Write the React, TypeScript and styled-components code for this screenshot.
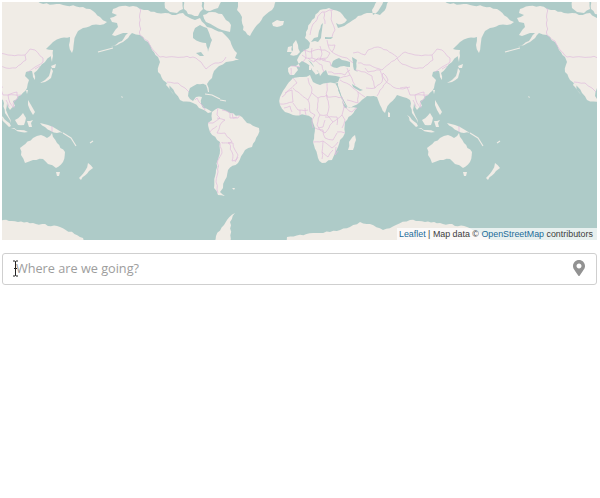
import React from 'react';
import styled, { createGlobalStyle } from 'styled-components';
import { FaMapMarkerAlt } from 'react-icons/fa';

const SEA = '#aecbc8';
const LAND = '#f0ece6';
const BORDER = '#dfbcdc';

const Global = createGlobalStyle`
  html, body { margin: 0; padding: 0; background: #fff; }
  input::placeholder { color: #9d9d9d; opacity: 1; }
`;

const Page = styled.div`
  display: flex;
  flex-direction: column;
  gap: 13px;
  width: 595px;
  padding: 2px 3px 0 2px;
  font-family: "Open Sans", sans-serif;
`;

const MapBox = styled.div`
  position: relative;
  height: 238px;
  overflow: hidden;
  background: ${SEA};
`;

const MapArt = styled.svg`
  display: block;
  width: 595px;
  height: 238px;
`;

const Attribution = styled.div`
  position: absolute;
  right: 0;
  bottom: 0;
  width: 194px;
  height: 12px;
  padding-left: 2px;
  padding-right: 4px;
  background: rgba(255, 255, 255, 0.7);
  font: 8.9px/12px "Liberation Sans", Arial, sans-serif;
  color: #3c3c3c;
  white-space: nowrap;
`;

const AttrLink = styled.a`
  color: #1d6c98;
  text-decoration: none;
`;

const Search = styled.label`
  position: relative;
  display: flex;
  align-items: center;
  height: 30px;
  padding: 0 11px 2px 13px;
  box-sizing: border-box;
  height: 32px;
  border: 1px solid #cfcfcf;
  border-radius: 3px;
  background: #fff;
`;

const SearchInput = styled.input`
  flex: 1;
  min-width: 0;
  border: 0;
  outline: 0;
  padding: 0;
  background: transparent;
  font: 12.7px "Open Sans", sans-serif;
  color: #555;
`;

const PinIcon = styled(FaMapMarkerAlt)`
  flex: none;
  width: 12px;
  height: 16px;
  color: #929292;
`;

const TextCursor = styled.svg`
  position: absolute;
  left: 9px;
  top: 6px;
  width: 7px;
  height: 17px;
`;

const lands = [
  // North America
  'M140,9 133,6 122,6 113,9 112,13 117,15 110,18 112,22 117,23 118,27 112,35 115,36 123,33 128,33 122,41 110,47 123,42 132,33 140,35 148,42 152,50 158,57 160,62 158,72 163,80 168,84 175,93 180,100 193,103 199,108 208,113 212,112 209,110 203,108 201,104 202,97 196,97 193,101 190,99 188,96 190,88 197,84 206,85 208,92 209,92 207,84 212,78 214,71 219,66 226,62 233,61 239,60 235,58 237,53 233,48 228,38 222,32 215,30 207,27 200,18 195,20 188,17 183,13 172,15 165,13 157,13 148,10Z',
  'M167,83 172,92 174,95 170,90 166,85Z',
  // Arctic islands
  'M165,0 182,0 183,9 177,13 170,12 165,8Z',
  'M184,0 201,0 203,9 198,16 188,14 184,9Z',
  'M203,0 222,0 218,8 210,11 204,9Z',
  'M203,15 212,12 222,14 231,25 230,32 222,30 214,26 206,22Z',
  // Greenland
  'M238,0 276,0 272,10 263,17 257,25 250,36 243,30 242,17 237,10Z',
  // Iceland
  'M272,23 277,20 284,21 283,25 277,27 273,26Z',
  // South America
  'M212,112 218,108 230,113 242,117 247,123 259,128 258,135 252,147 245,150 238,163 228,170 225,180 223,188 220,192 225,196 218,195 214,188 216,170 220,150 220,142 210,132 208,123 212,120Z',
  // Africa
  'M293,78 287,85 280,97 280,105 285,112 293,115 305,115 312,118 315,128 313,142 318,158 322,163 332,160 338,147 340,140 345,133 345,122 357,108 347,108 342,100 338,87 338,83 327,83 320,85 313,82 310,75 303,77Z',
  // Eurasia
  'M290,75 288,68 291,66 300,67 297,60 299,56 305,50 309,48 310,43 305,38 306,32 312,20 320,10 329,8 340,12 347,20 342,24 336,23 338,28 347,24 358,16 370,13 380,15 386,8 389,0 440,0 447,3 470,5 490,7 500,11 507,17 514,22 507,25 499,25 490,28 485,31 481,42 479,53 476,45 477,37 468,38 460,42 455,47 453,49 459,50 458,56 452,62 446,68 441,73 442,80 440,77 439,71 433,72 432,76 436,80 434,88 428,95 420,101 422,106 417,110 414,103 413,110 418,123 412,113 410,100 403,97 397,95 390,103 385,113 380,105 377,97 367,96 360,102 350,108 345,108 342,98 338,88 335,83 338,82 340,77 336,76 328,75 326,70 323,72 320,76 317,70 313,65 308,60 313,66 318,72 316,75 312,70 306,63 302,61 296,66 298,70 294,75Z',
  'M296,40 298,45 300,52 297,55 290,55 293,50 293,44Z',
  'M288,47 292,46 292,52 287,52Z',
  'M309,66 311,66 311,70 309,70Z',
  'M316,72 319,72 318,74Z',
  'M373,15 380,8 384,0 378,0 372,10Z',
  'M447,83 452,80 456,76 458,68 460,71 458,78 452,82Z',
  'M458,66 463,64 462,68 459,68Z',
  'M458,50 460,50 460,56 459,62 458,58Z',
  'M433,90 435,90 434,94Z',
  'M388,112 390,113 390,117 388,117Z',
  'M422,120 430,113 433,118 431,125 425,125Z',
  'M407,115 410,117 418,126 416,127 412,123Z',
  'M418,128 427,130 435,132 428,132Z',
  'M434,121 440,120 438,123 439,127 436,127 435,124Z',
  'M447,123 455,125 460,127 470,133 464,133 458,131 452,127Z',
  'M435,100 438,105 442,112 440,115 437,110 435,105Z',
  // Australia
  'M427,148 440,138 448,135 454,138 459,133 464,143 472,152 470,162 463,168 455,164 450,159 440,160 432,163 428,155Z',
  'M463,172 467,172 466,176 464,176Z',
  'M495,163 500,168 496,171 488,180 486,178 492,171Z',
  'M348,150 349,142 355,135 356,140 353,150Z',
  // Antarctica
  'M285,245 287,237 313,233 330,232 350,227 360,222 370,224 383,230 396,225 410,220 440,223 467,227 490,238 492,245Z',
  'M213,245 216,236 224,225 227,220 235,213 230,222 231,245Z',
  'M232,188 235,188 234,190Z',
  'M121,96 123,97 122,98Z',
];

const coastLines = [
  'M205,94 212,95 220,99',
  'M220,100 226,101',
  'M98,52 113,48',
  'M470,133 478,138 483,146',
  'M497,143 500,141',
];

const seas = [
  'M193,33 195,28 200,25 207,28 212,40 208,52 206,43 200,42 193,38Z',
  'M311,42 315,41 318,42 321,38 322,30 323,23 321,25 319,31 318,37 314,38Z',
  'M325,37 333,37 331,39 325,39Z',
  'M331,66 333,61 339,58 342,60 350,62 350,67 344,66 337,68Z',
  'M352,57 357,60 356,70 358,72 354,70 353,63Z',
  'M352,84 357,87 363,90 360,91 356,89 353,87Z',
  'M196,53 201,52 204,56 200,56Z',
];

const redSea = 'M337,84 341,96 347,107';

const borders = [
  // North America
  'M140,8 140,35 148,41 153,50 160,57 193,57 201,62 206,69 215,63 222,62 226,57',
  'M167,82 178,83 185,88 189,92',
  'M195,100 197,98 199,102 203,106 205,110',
  // South America
  'M218,108 217,115 220,118 213,123 208,123',
  'M222,110 230,113 230,118 237,117',
  'M232,113 233,118 238,118 240,115',
  'M217,118 225,120 220,125 217,133 225,133 232,142 228,143 233,143 235,150 238,155 236,160 232,161 233,155 229,143 222,143 222,142',
  'M220,143 222,153 218,160 218,172 216,182 218,193',
  'M238,157 235,162',
  'M210,132 217,126',
  // Europe
  'M310,35 313,24 322,12 333,10',
  'M325,24 324,12',
  'M331,10 332,22 335,30 332,37',
  'M327,40 328,45 332,52 342,57 347,58',
  'M303,50 310,52 315,50 325,50 330,53 327,58 320,60 312,58 306,58 302,55',
  'M312,48 312,58',
  'M320,46 322,54 320,60',
  'M322,60 330,62 331,66',
  'M314,60 322,65 324,72',
  'M291,66 300,67',
  'M291,68 291,75',
  'M305,50 306,58 303,62',
  'M328,45 335,45 332,52',
  'M308,58 314,62 318,58 326,60',
  // Russia / Central Asia
  'M353,53 358,52 365,55 368,50 378,47 387,50 397,57',
  'M347,58 353,63',
  'M358,63 370,65 382,70 397,58',
  'M397,58 405,52 415,55 425,55 432,55 433,60 423,68 413,68 402,64 397,58',
  'M432,55 437,49 442,50 450,58 450,62 442,67 435,72',
  'M442,69 447,66',
  'M365,68 368,72 380,70 385,80 393,87 403,89 410,87',
  'M355,70 365,72 372,76 375,88 382,82 383,73',
  'M383,73 388,80 380,90 377,96',
  'M375,88 366,88',
  'M347,68 350,75 355,85',
  'M328,72 345,75 350,70',
  'M340,80 350,85 358,92 365,97',
  'M358,92 358,103 347,100',
  'M340,78 350,75',
  'M400,88 407,87 410,95 415,95 417,103 420,107',
  'M415,95 424,92 425,98 420,103 421,108',
  'M415,95 428,95',
  'M413,100 416,107',
  // Africa
  'M293,78 297,83 282,97',
  'M285,93 292,90 293,102 280,104',
  'M293,88 308,100 310,112',
  'M308,78 312,90 308,100',
  'M312,93 318,98 327,95',
  'M327,83 327,97 342,97',
  'M318,98 317,110 320,115',
  'M327,95 329,107 327,115',
  'M342,97 344,107 342,115',
  'M344,107 352,112 357,108',
  'M293,103 298,110 308,110',
  'M310,112 315,115 312,120 313,128',
  'M320,115 317,125 320,130',
  'M320,115 327,115 333,122 342,115 345,120 342,128',
  'M318,128 323,127 325,120',
  'M320,130 325,133 330,125 333,122',
  'M325,117 337,117 337,125',
  'M315,128 323,130 325,138 333,140 337,133',
  'M337,132 345,133',
  'M313,142 323,141 322,152 322,159',
  'M323,141 332,148 338,142',
  'M322,152 328,157 333,150',
  'M336,147 335,155 338,151',
  'M284,108 290,106 292,112',
  'M300,110 300,115',
  'M305,108 306,115',
  'M459,126 459,132',
];

// Small deterministic wobble: real coasts and frontiers are not straight lines.
function rough(d: string, amp: number): string {
  const closed = d.trim().endsWith('Z');
  const pts = d.replace(/[MZ]/g, '').trim().split(/\s+/).map((p) => p.split(',').map(Number));
  if (closed) pts.push(pts[0]);
  let out = `M${pts[0][0]},${pts[0][1]}`;
  for (let i = 1; i < pts.length; i += 1) {
    const [ax, ay] = pts[i - 1];
    const [bx, by] = pts[i];
    const len = Math.hypot(bx - ax, by - ay);
    const steps = Math.max(1, Math.floor(len / 3));
    for (let s = 1; s <= steps; s += 1) {
      const t = s / steps;
      const seed = Math.sin((ax + bx * 1.7 + s * 3.1) * 12.9898 + (ay + by * 0.9) * 78.233) * 43758.5453;
      const n = (seed - Math.floor(seed) - 0.5) * 2 * (s === steps ? 0 : amp);
      const nx = len ? -(by - ay) / len : 0;
      const ny = len ? (bx - ax) / len : 0;
      out += ` ${(ax + (bx - ax) * t + nx * n).toFixed(1)},${(ay + (by - ay) * t + ny * n).toFixed(1)}`;
    }
  }
  return out + (closed ? 'Z' : '');
}

const landPath = lands.map((d) => rough(d, 0.9)).join(' ');
const seaPath = seas.map((d) => rough(d, 0.5)).join(' ');
const borderPath = borders.map((d) => rough(d, 0.7)).join(' ');

const World: React.FC<{ dx: number }> = ({ dx }) => (
  <g transform={`translate(${dx} 0)`}>
    <path d={landPath} fill={LAND} />
    <path d={seaPath} fill={SEA} />
    <path d={redSea} fill="none" stroke={SEA} strokeWidth={1} />
    <path d={coastLines.join(' ')} fill="none" stroke={LAND} strokeWidth={1.1} />
    <path d={borderPath} fill="none" stroke={BORDER} strokeWidth={0.7} />
  </g>
);

export default function App() {
  return (
    <>
      <Global />
      <Page>
        <MapBox>
          <MapArt viewBox="2 2 595 238">
            <defs>
              <filter id="soft" x="-5%" y="-5%" width="110%" height="110%">
                <feGaussianBlur stdDeviation="0.4" />
              </filter>
            </defs>
            <g filter="url(#soft)">
              <World dx={-407} />
              <World dx={0} />
              <World dx={407} />
            </g>
          </MapArt>
          <Attribution>
            <AttrLink href="#">Leaflet</AttrLink> | Map data © <AttrLink href="#">OpenStreetMap</AttrLink> contributors
          </Attribution>
        </MapBox>
        <Search>
          <SearchInput placeholder="Where are we going?" />
          <PinIcon />
          <TextCursor viewBox="0 0 7 17">
            <path d="M1 1h2l.5.6.5-.6h2M3.5 1.5v14M1 16h2l.5-.6.5.6h2M2 8.5h3" fill="none" stroke="#222" strokeWidth="1" />
          </TextCursor>
        </Search>
      </Page>
    </>
  );
}
